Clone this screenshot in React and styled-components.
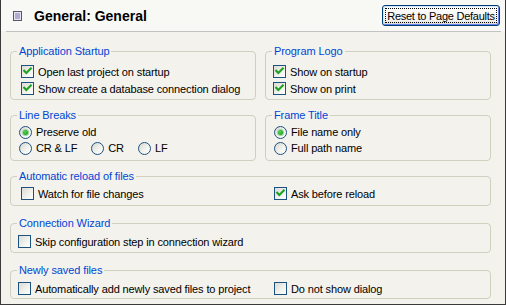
import React from 'react';
import styled, { createGlobalStyle } from 'styled-components';

const Global = createGlobalStyle`
  html, body { margin: 0; padding: 0; background: #f3f2ed; }
  body { font-family: "Liberation Sans", Arial, sans-serif; font-size: 11px; color: #000; }
  * { box-sizing: border-box; }
`;

const Frame = styled.div`
  width: 506px;
  height: 305px;
  background: #f3f2ed;
  border: 1px solid #3a3a3a;
  border-top: none;
  display: flex;
  flex-direction: column;
  overflow: hidden;
`;

const Header = styled.div`
  height: 31px;
  display: flex;
  align-items: center;
  padding: 0 5px 0 12px;
  background: #f8f8f5;
`;

const Title = styled.h1`
  margin: 0 0 0 11px;
  flex: 1;
  font-size: 14px;
  font-weight: bold;
  line-height: 16px;
`;

const ResetButton = styled.button`
  width: 118px;
  height: 21px;
  padding: 0;
  font-family: "Liberation Sans", Arial, sans-serif;
  font-size: 11px;
  letter-spacing: -0.25px;
  color: #000;
  border: 1px solid #003c74;
  border-radius: 3px;
  background: linear-gradient(#ffffff, #f3f2ee 75%, #dcd7cc);
  box-shadow: inset 1px 1px 0 #cee7ff, inset -1px -1px 0 #6982ee;
  outline: 1px dotted #000;
  outline-offset: -4px;
  white-space: nowrap;
`;

const Rule = styled.div`
  height: 1px;
  margin: 0 4px 0 5px;
  background: #c2c2c2;
`;

const Content = styled.div`
  padding: 13px 14px 0 9px;
  display: flex;
  flex-direction: column;
`;

const TwoCols = styled.div`
  display: grid;
  grid-template-columns: 246px 226px;
  column-gap: 9px;
  margin-top: ${p => p.$mt || 0}px;
`;

const Group = styled.fieldset`
  margin: ${p => p.$mt || 0}px 0 0 0;
  padding: ${p => p.$pt}px 0 ${p => p.$pb}px 0;
  border: 1px solid #d0d0bf;
  border-radius: 4px;
  min-width: 0;
`;

const Legend = styled.legend`
  margin-left: 6px;
  padding: 0 2px;
  color: #0046d5;
  font-size: 11px;
  line-height: 13px;
  letter-spacing: -0.1px;
`;

const Items = styled.div`
  display: flex;
  flex-direction: column;
  padding-left: ${p => p.$indent}px;
`;

const InlineItems = styled.div`
  display: flex;
  gap: 14px;
`;

const SplitRow = styled.div`
  display: grid;
  grid-template-columns: 245px 1fr;
  column-gap: 10px;
`;

const Cell = styled.div`
  padding-left: ${p => p.$indent}px;
`;

const Option = styled.label`
  display: flex;
  align-items: center;
  gap: 4px;
  height: ${p => p.$h || 17}px;
  white-space: nowrap;
  letter-spacing: -0.13px;
`;

const Box = styled.span`
  width: 13px;
  height: 13px;
  flex: none;
  display: inline-flex;
  align-items: center;
  justify-content: center;
  border: 1px solid #1c5180;
  background: linear-gradient(135deg, #dcdcd5 0%, #f2f2ee 60%, #ffffff 100%);
`;

const Round = styled.span`
  width: 13px;
  height: 13px;
  flex: none;
  display: inline-flex;
  align-items: center;
  justify-content: center;
  border: 1px solid #1c5180;
  border-radius: 50%;
  background: linear-gradient(135deg, #d8d8d2 0%, #f4f4f0 60%, #ffffff 100%);
`;

const Dot = styled.span`
  width: 5px;
  height: 5px;
  border-radius: 50%;
  background: radial-gradient(circle at 40% 40%, #55d655 0%, #21a121 70%);
  box-shadow: 0 0 0 1px #9ad59a;
`;

function Check({ checked }) {
  return (
    <Box>
      {checked && (
        <svg width="11" height="11" viewBox="0 0 11 11">
          <path d="M2.2 4.8 L4.3 7 L8.8 2.5" fill="none" stroke="#21a121" strokeWidth="2.1" strokeLinecap="square" />
        </svg>
      )}
    </Box>
  );
}

function Radio({ checked }) {
  return <Round>{checked && <Dot />}</Round>;
}

function CheckOption({ checked, children, h }) {
  return (
    <Option $h={h}>
      <Check checked={checked} />
      <span>{children}</span>
    </Option>
  );
}

function RadioOption({ checked, children, h }) {
  return (
    <Option $h={h}>
      <Radio checked={checked} />
      <span>{children}</span>
    </Option>
  );
}

function PageIcon() {
  return (
    <svg width="10" height="10" viewBox="0 0 10 10">
      <rect x="0.5" y="0.5" width="8" height="9" fill="#e6e6f2" stroke="#55556e" />
      <line x1="2" y1="3" x2="7" y2="3" stroke="#7a74b0" />
      <line x1="2" y1="5" x2="7" y2="5" stroke="#7a74b0" />
      <line x1="2" y1="7" x2="7" y2="7" stroke="#7a74b0" />
    </svg>
  );
}

export default function App() {
  return (
    <>
      <Global />
      <Frame>
        <Header>
          <PageIcon />
          <Title>General: General</Title>
          <ResetButton>Reset to Page Defaults</ResetButton>
        </Header>
        <Rule />
        <Content>
          <TwoCols>
            <Group $pt={5} $pb={2}>
              <Legend>Application Startup</Legend>
              <Items $indent={10}>
                <CheckOption checked>Open last project on startup</CheckOption>
                <CheckOption checked>Show create a database connection dialog</CheckOption>
              </Items>
            </Group>
            <Group $pt={5} $pb={2}>
              <Legend>Program Logo</Legend>
              <Items $indent={7}>
                <CheckOption checked>Show on startup</CheckOption>
                <CheckOption checked>Show on print</CheckOption>
              </Items>
            </Group>
          </TwoCols>
          <TwoCols $mt={9}>
            <Group $pt={2} $pb={4}>
              <Legend>Line Breaks</Legend>
              <Items $indent={8}>
                <RadioOption checked h={16}>Preserve old</RadioOption>
                <InlineItems>
                  <RadioOption h={16}>CR &amp; LF</RadioOption>
                  <RadioOption h={16}>CR</RadioOption>
                  <RadioOption h={16}>LF</RadioOption>
                </InlineItems>
              </Items>
            </Group>
            <Group $pt={2} $pb={4}>
              <Legend>Frame Title</Legend>
              <Items $indent={8}>
                <RadioOption checked h={16}>File name only</RadioOption>
                <RadioOption h={16}>Full path name</RadioOption>
              </Items>
            </Group>
          </TwoCols>
          <Group $mt={9} $pt={2} $pb={3}>
            <Legend>Automatic reload of files</Legend>
            <SplitRow>
              <Cell $indent={10}>
                <CheckOption>Watch for file changes</CheckOption>
              </Cell>
              <Cell $indent={8}>
                <CheckOption checked>Ask before reload</CheckOption>
              </Cell>
            </SplitRow>
          </Group>
          <Group $mt={11} $pt={3} $pb={2}>
            <Legend>Connection Wizard</Legend>
            <Items $indent={7}>
              <CheckOption>Skip configuration step in connection wizard</CheckOption>
            </Items>
          </Group>
          <Group $mt={11} $pt={3} $pb={1}>
            <Legend>Newly saved files</Legend>
            <SplitRow>
              <Cell $indent={7}>
                <CheckOption>Automatically add newly saved files to project</CheckOption>
              </Cell>
              <Cell $indent={8}>
                <CheckOption>Do not show dialog</CheckOption>
              </Cell>
            </SplitRow>
          </Group>
        </Content>
      </Frame>
    </>
  );
}
